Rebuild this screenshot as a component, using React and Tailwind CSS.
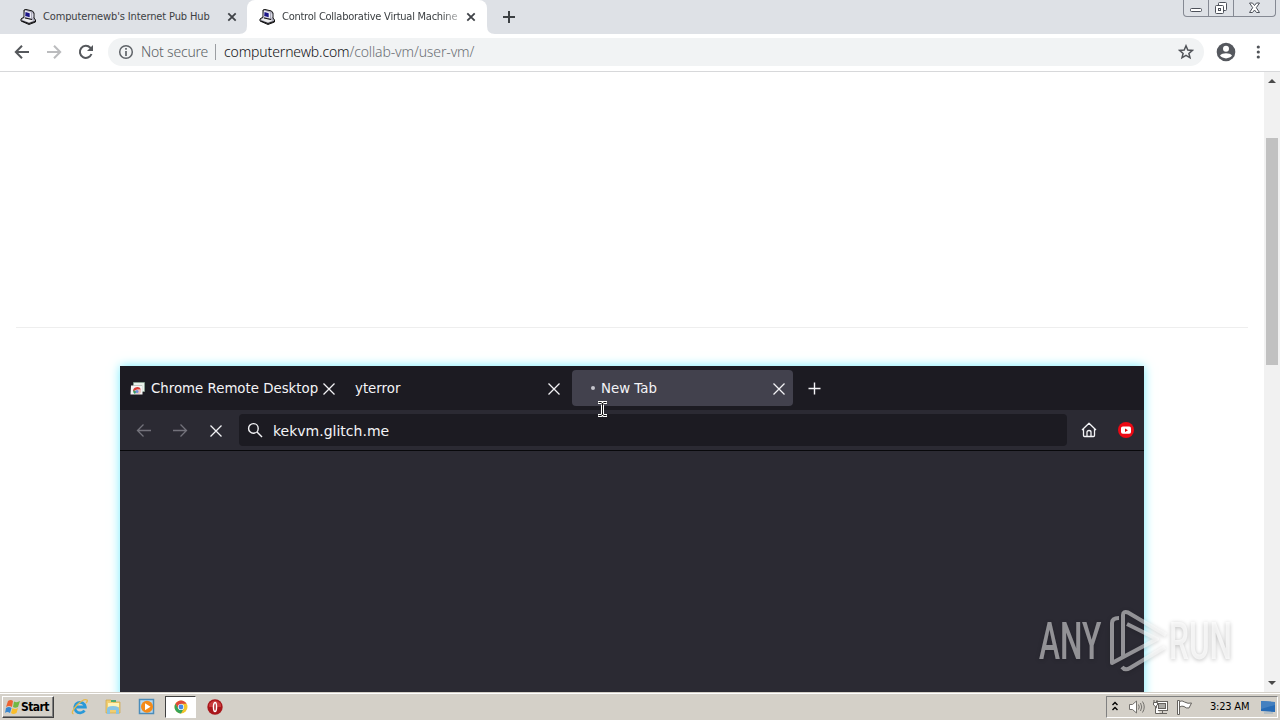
import React from 'react';

const Icon = ({ w = 16, h = w, className = '', children, stroke = 'none', sw = 1.5 }) => (
  <svg width={w} height={h} viewBox={`0 0 ${w} ${h}`} fill="none" stroke={stroke} strokeWidth={sw} className={`block shrink-0 ${className}`}>
    {children}
  </svg>
);

const Computer = ({ className }) => (
  <Icon className={className}>
    <path d="M4 1L6 .5L12.5 2L14 4V9L15.5 11V13L9 15.5L1 12V10L4 8Z" fill="#aaa9b8" stroke="#111" strokeWidth="1" />
    <path d="M5 1.5L11 3.5V9.5L4.5 7.5Z" fill="#eeeef5" />
    <path d="M5.5 3L9.7 4.3V8.3L5.2 7Z" fill="#1c1688" />
    <path d="M2 10.5L5 9L13.5 11.5L9 13.5Z" fill="#eee" />
    <path d="M2 12L9 14.5L15 12.5M5 9L12 10.5" stroke="#111" strokeWidth="1" />
    <path d="M12 4L13.3 5V8L12 9.5Z" fill="#dcdce7" />
  </Icon>
);

const Close = ({ className }) => (
  <Icon w={10} className={className} stroke="#3f4247" sw={1.8}><path d="M1.3 1.3L8.7 8.7M8.7 1.3L1.3 8.7" /></Icon>
);

const ThinClose = ({ className }) => (
  <Icon w={14} className={className} stroke="#f2f2f5" sw={1.3}><path d="M1.5 1.5L12.5 12.5M12.5 1.5L1.5 12.5" /></Icon>
);

function TabStrip() {
  return (
    <div className="flex h-[34px] bg-[#dee1e6] text-[#3c4043]">
      <div className="flex h-[34px] w-[247px] shrink-0 items-center">
        <Computer className="ml-5" />
        <span className="ml-[7px] w-[184px] whitespace-nowrap pt-px font-['DejaVu_Sans_Condensed','DejaVu_Sans',sans-serif] text-[11px] tracking-[-0.13px]">Computernewb's Internet Pub Hub</span>
        <Close />
      </div>
      <div className="relative flex h-[34px] w-[240px] shrink-0 items-center rounded-t-lg bg-white">
        <Computer className="ml-3" />
        <span className="ml-[7px] w-[177px] whitespace-nowrap pt-px font-['DejaVu_Sans_Condensed','DejaVu_Sans',sans-serif] text-[11px] tracking-[-0.25px] [mask-image:linear-gradient(to_right,black_90%,rgba(0,0,0,0.3))]">Control Collaborative Virtual Machine</span>
        <Close className="ml-[7px]" />
        <svg className="absolute -left-2 bottom-0" width="8" height="8"><path d="M8 0V8H0Q8 8 8 0Z" fill="#fff" /></svg>
        <svg className="absolute -right-2 bottom-0" width="8" height="8"><path d="M0 0V8H8Q0 8 0 0Z" fill="#fff" /></svg>
      </div>
      <Icon w={12} className="ml-4 mt-[11px]" stroke="#3c4043" sw={2}><path d="M6 0V12M0 6H12" /></Icon>
      <div className="ml-auto mr-1 flex h-[17px] w-[93px] rounded-b border border-t-0 border-[#858993] text-[#41454d]">
        <div className="flex w-[25px] justify-center border-r border-[#858993] pt-[7px]">
          <Icon w={13} h={6} stroke="#4d515a" sw={1}><rect x="0.5" y="1.5" width="11" height="3" rx="1" fill="#fff" /></Icon>
        </div>
        <div className="flex w-[25px] justify-center border-r border-[#858993] pt-px">
          <Icon w={14} stroke="#4d515a" sw={1}><rect x="4.5" y="1.5" width="8" height="8" rx="1" fill="#fff" /><rect x="1.5" y="4.5" width="8" height="8" rx="1" fill="#fff" /><rect x="4.5" y="7.5" width="2" height="2" /></Icon>
        </div>
        <div className="flex flex-1 justify-center pt-[2px]">
          <Icon w={13} h={12} stroke="#4d515a" sw={1}><path d="M1.5 1H4.5L6.5 3.5L8.5 1H11.5L8.3 5.7L11.5 10.5H8.5L6.5 8L4.5 10.5H1.5L4.7 5.7Z" fill="#fff" /></Icon>
        </div>
      </div>
    </div>
  );
}

function Toolbar() {
  return (
    <div className="flex h-[38px] items-center border-b border-[#d7d8da] bg-white pb-px">
      <Icon className="ml-[14px]" stroke="#55585c" sw={2}><path d="M15 8H2M8 1.7L1.8 8L8 14.3" /></Icon>
      <Icon className="ml-4" stroke="#bbbcbe" sw={2}><path d="M1 8H14M8 1.7L14.2 8L8 14.3" /></Icon>
      <Icon className="ml-4" stroke="#55585c" sw={2}><path d="M13.5 10A6 6 0 1 1 12.3 3.8L14 5.5" /><path d="M15 1V7H9Z" fill="#55585c" stroke="none" /></Icon>
      <div className="ml-[14px] flex h-7 w-[1096px] items-center rounded-full bg-[#f1f3f4] font-['Noto_Sans',sans-serif] text-[14px] font-light">
        <Icon className="ml-[10px]" stroke="#5f6368" sw={1.5}><circle cx="8" cy="8" r="6.3" /><path d="M8 7V12M8 4V5.7" strokeWidth="1.7" /></Icon>
        <span className="ml-[7px] w-[74px] whitespace-nowrap pb-px text-[#5b5f64] tracking-[-0.2px]">Not secure</span>
        <span className="h-4 w-px bg-[#9b9ea2]" />
        <span className="ml-2 whitespace-nowrap pb-px text-[#6c7075] tracking-[-0.13px]"><span className="text-[#111214]">computernewb.com</span>/collab-vm/user-vm/</span>
        <Icon className="ml-auto mr-[10px]" stroke="#505358" sw={1.5}><path d="M8 1.8L9.8 6L14.3 6.4L10.9 9.4L12 13.8L8 11.4L4 13.8L5.1 9.4L1.7 6.4L6.2 6Z" /></Icon>
      </div>
      <Icon w={20} className="ml-3"><circle cx="10" cy="10" r="9.3" fill="#55585e" /><circle cx="10" cy="6.8" r="3" fill="#fff" /><path d="M4 13.6C6.2 10.6 13.8 10.6 16 13.6C13.5 17.3 6.5 17.3 4 13.6Z" fill="#fff" /></Icon>
      <Icon w={4} h={16} className="ml-5"><circle cx="2.3" cy="3" r="1.6" fill="#505358" /><circle cx="2.3" cy="8" r="1.6" fill="#505358" /><circle cx="2.3" cy="13" r="1.6" fill="#505358" /></Icon>
    </div>
  );
}

function RemoteScreen() {
  return (
    <div className="relative ml-[120px] mt-[38px] h-[340px] w-[1024px] bg-[#2b2a33] font-['DejaVu_Sans',sans-serif] text-[13.33px] text-[#f4f4f7] shadow-[0_0_10px_#76edff]">
      <div className="flex h-11 items-center bg-[#1c1b22]">
        <Icon w={15} className="ml-[10px]">
          <path d="M3.5 1.5H14.5V10.5H12V4.5H3.5Z" fill="#e9f1eb" stroke="#8aa894" strokeWidth=".7" />
          <path d="M1 4.5H12.5V13.5H.5Z" fill="#f5f4f4" />
          <path d="M3 10.5A4.2 4.2 0 0 1 11 8.5H7Z" fill="#d83b34" />
          <path d="M3 9.5A4 4 0 0 0 5 13L7 10Z" fill="#3c9b5f" />
          <path d="M7 9L11 9Q11.5 12 9 13H6Z" fill="#e8c6bd" />
          <circle cx="7" cy="10.5" r="1.5" fill="#6e8ddb" />
        </Icon>
        <span className="ml-[6px] w-[171px] whitespace-nowrap pt-[2px]">Chrome Remote Desktop</span>
        <ThinClose className="mt-px" />
        <span className="ml-[19px] w-[192px] pt-[2px]">yterror</span>
        <ThinClose className="mt-px" />
        <div className="ml-[11px] flex h-9 w-[221px] items-center rounded bg-[#42414d]">
          <span className="ml-[19px] size-1 rounded-full bg-[#c5c5cc]" />
          <span className="ml-[6px] w-[171px] whitespace-nowrap pt-[2px]">New Tab</span>
          <ThinClose className="mt-px" />
        </div>
        <Icon w={13} className="ml-[15px] mt-px" stroke="#f4f4f7" sw={1.4}><path d="M6.5 .5V12.5M.5 6.5H12.5" /></Icon>
      </div>
      <div className="flex h-[41px] items-center border-b border-[#08080b]">
        <Icon className="ml-4" stroke="#73727b" sw={1.3}><path d="M15 8.5H1.5M7.5 2.5L1.5 8.5L7.5 14.5" /></Icon>
        <Icon className="ml-5" stroke="#73727b" sw={1.3}><path d="M1 8.5H14.5M8.5 2.5L14.5 8.5L8.5 14.5" /></Icon>
        <ThinClose className="ml-[21px] mt-px" />
        <div className="ml-4 flex h-8 w-[828px] items-center rounded bg-[#1c1b22]">
          <Icon className="ml-2" stroke="#f4f4f7" sw={1.4}><circle cx="6.4" cy="6.4" r="4.8" /><path d="M10 10L15 15" /></Icon>
          <span className="ml-[10px] pt-[2px] text-[14px]">kekvm.glitch.me</span>
        </div>
        <Icon className="ml-[14px]" stroke="#f4f4f7" sw={1.3}><path d="M1 8L8 1.2L15 8M2.5 6.8V13.5Q2.5 14.5 3.5 14.5H12.5Q13.5 14.5 13.5 13.5V6.8M6 14.5V10.2Q6 8.5 8 8.5Q10 8.5 10 10.2V14.5" strokeLinejoin="round" /></Icon>
        <Icon className="ml-[21px]"><circle cx="8" cy="8" r="8" fill="#ec0914" /><rect x="3" y="4.5" width="10" height="7.3" rx="1.8" fill="#fff" /><path d="M7 6.5L10 8.2L7 9.9Z" fill="#d00" /></Icon>
      </div>
      <svg className="absolute left-[477px] top-[35px]" width="11" height="16" viewBox="0 0 11 16" fill="none">
        <path d="M1 1.5H4.2L5.5 2.3L6.8 1.5H10M5.5 2V14M1 14.5H4.2L5.5 13.7L6.8 14.5H10" stroke="#fff" strokeWidth="3" />
        <path d="M1.5 1.5H4L5.5 2.5L7 1.5H9.5M5.5 2V14M1.5 14.5H4L5.5 13.5L7 14.5H9.5" stroke="#111" strokeWidth="1" />
      </svg>
    </div>
  );
}

function Watermark() {
  return (
    <div className="absolute left-[1036px] top-[608px] h-[68px] w-[204px] font-['Roboto',sans-serif] text-[51px] leading-[67px] drop-shadow-[0_1px_2px_rgba(0,0,0,0.35)]">
      <span className="absolute left-[3px] top-0 origin-left scale-x-[0.62] font-medium text-white/50">ANY</span>
      <svg className="absolute left-[73px] top-0" width="60" height="68" fill="none" stroke="#fff" strokeOpacity=".5" strokeWidth="4" strokeLinejoin="round" strokeLinecap="butt">
        <path d="M10 10Q3 10 3 15V55L48 31L18 16M14 49V7Q14 3 19 4.5L57 27M13 59Q16 63 21 60L56 39" />
      </svg>
      <span className="absolute left-[133px] top-0 origin-left scale-x-[0.62] font-medium text-white/70">RUN</span>
    </div>
  );
}

function Taskbar() {
  return (
    <div className="flex h-7 items-center border-t border-[#d4d0c8] bg-[#d4d0c8] pb-px pt-[2px] font-['DejaVu_Sans_Condensed','DejaVu_Sans',sans-serif] text-[11px] text-black shadow-[inset_0_1px_#fff]">
      <div className="ml-[2px] flex h-[22px] w-[52px] items-center border border-b-[#404040] border-l-white border-r-[#404040] border-t-white font-bold shadow-[inset_-1px_-1px_#808080]">
        <Icon className="ml-[2px]">
          <path d="M3 2Q6 0 8 2L7 8Q4 6 1 8Z" fill="#ed6332" /><path d="M9 2.5Q12 4 15 2L13 8Q10 9.5 8 8Z" fill="#72b843" />
          <path d="M1 9Q4 7 6.5 9L5 14Q2 12 0 14Z" fill="#3887d0" /><path d="M7.5 9Q10 11 13 9L11.5 14Q8 16 6 14Z" fill="#f9bd2b" />
        </Icon>
        <span className="text-[12px] tracking-[-0.6px]">Start</span>
      </div>
      <Icon w={18} className="ml-[17px]">
        <path d="M13.5 12.5A5.3 5.3 0 1 1 14.3 9H5" stroke="#2999d8" strokeWidth="2.8" />
        <path d="M2.5 16Q-1 15 6 7Q13 0 16 2Q17 3 15 5" stroke="#e6b94b" strokeWidth="1.3" />
      </Icon>
      <Icon w={18} className="ml-[15px]">
        <path d="M2 4V2H7L9 4H16V15H2Z" fill="#f1ce70" stroke="#cda849" strokeWidth=".7" /><path d="M4 5H15V9H4Z" fill="#fff3b7" />
        <path d="M7 2H12V4H7Z" fill="#4daa72" /><path d="M3 16V11Q3 8 9 8Q15 8 15 11V16H12V12H6V16Z" fill="#88c4e4" />
      </Icon>
      <Icon w={18} className="ml-4">
        <rect x="1.5" y="1.5" width="14" height="14" fill="#b7d9f1" stroke="#4b8cb9" /><circle cx="9" cy="8.7" r="6" fill="#f48a19" /><path d="M7 5.2L12.5 8.7L7 12.2Z" fill="#fff" />
      </Icon>
      <div className="ml-[9px] flex h-[22px] w-[31px] items-center justify-center border border-b-white border-l-[#404040] border-r-white border-t-[#404040] bg-white">
        <Icon w={14}>
          <circle cx="7" cy="7" r="6.5" fill="#f4c52c" /><path d="M1.4 3.8A6.5 6.5 0 0 1 12.6 3.8H7L4.2 8.6Z" fill="#df493b" />
          <path d="M1.4 3.8A6.5 6.5 0 0 0 7 13.5L9.8 8.6H4.2Z" fill="#35a35a" /><circle cx="7" cy="7" r="3.1" fill="#fff" /><circle cx="7" cy="7" r="2.4" fill="#4689e5" />
        </Icon>
      </div>
      <Icon className="ml-[11px]"><circle cx="8" cy="8" r="7.7" fill="#a9161b" /><path d="M2 5Q8-2 14 5V8H2Z" fill="#d74c4a" opacity=".7" /><ellipse cx="8" cy="8" rx="1.5" ry="4.5" fill="#a9161b" stroke="#fff" strokeWidth="1.5" /></Icon>
      <div className="ml-auto mr-[2px] flex h-[22px] w-[172px] items-center border border-b-white border-l-[#808080] border-r-white border-t-[#808080]">
        <Icon w={8} h={12} className="mb-[2px] ml-[4px]" stroke="#000" sw={1.4}><path d="M1.5 5L4 2.5L6.5 5M1.5 10L4 7.5L6.5 10" /></Icon>
        <Icon w={17} h={16} className="ml-[9px]" stroke="#73716d" sw={1}><path d="M1.5 5.5H4.5L8.5 2V14L4.5 10.5H1.5Z" fill="#fff" /><path d="M10.5 5.5Q12 8 10.5 10.5M12.5 4Q15 8 12.5 12M14.5 2.5Q18 8 14.5 13.5" /></Icon>
        <Icon w={17} h={16} className="ml-[7px]" stroke="#65625e" sw={1}><rect x="4.5" y="2.5" width="11" height="9" fill="#fff" /><rect x="6.5" y="4.5" width="7" height="5" fill="#aaa9a5" /><path d="M7 14.5H15M10.5 12V14M2 1V4M5 1V4" /><path d="M1.5 3.5H5.5V6L3.5 7.5L1.5 6ZM3.5 7.5V14.5H8" fill="#fff" /></Icon>
        <Icon w={17} h={16} className="ml-[7px]" stroke="#65625e" sw={1}><path d="M1.5 15.5V1.5H3.5V15.5Z" fill="#fff" /><path d="M3.5 2.5Q6 1 8.5 3Q12 5 15.5 4L13 9Q10 9.5 8 7.5Q6 6.5 3.5 8Z" fill="#fff" /></Icon>
        <span className="ml-[17px] w-[45px] whitespace-nowrap pt-px tracking-[-0.2px]">3:23 AM</span>
        <Icon w={16} className="ml-[5px]"><path d="M1 2L15 3V13L1 12Z" fill="#266bb6" /><path d="M1 2L15 3V6L1 10Z" fill="#4380c0" /><path d="M4 14H13" stroke="#aabac5" /></Icon>
      </div>
    </div>
  );
}

export default function App() {
  return (
    <div className="relative flex h-[720px] w-[1280px] flex-col overflow-hidden bg-white">
      <TabStrip />
      <Toolbar />
      <div className="flex h-[620px] shrink-0 overflow-hidden">
        <div className="h-full w-[1264px] overflow-hidden">
          <div className="mx-4 h-64 border-b border-[#eee]" />
          <RemoteScreen />
        </div>
        <div className="flex w-4 flex-col items-center bg-[#f1f1f1]">
          <Icon w={8} h={5} className="mt-[7px]"><path d="M0 4L4 0L8 4Z" fill="#4a4a4a" /></Icon>
          <div className="mt-[54px] h-[227px] w-3 bg-[#c1c1c1]" />
          <Icon w={8} h={5} className="mb-[6px] mt-auto"><path d="M0 0L4 4L8 0Z" fill="#4a4a4a" /></Icon>
        </div>
      </div>
      <Taskbar />
      <Watermark />
    </div>
  );
}
